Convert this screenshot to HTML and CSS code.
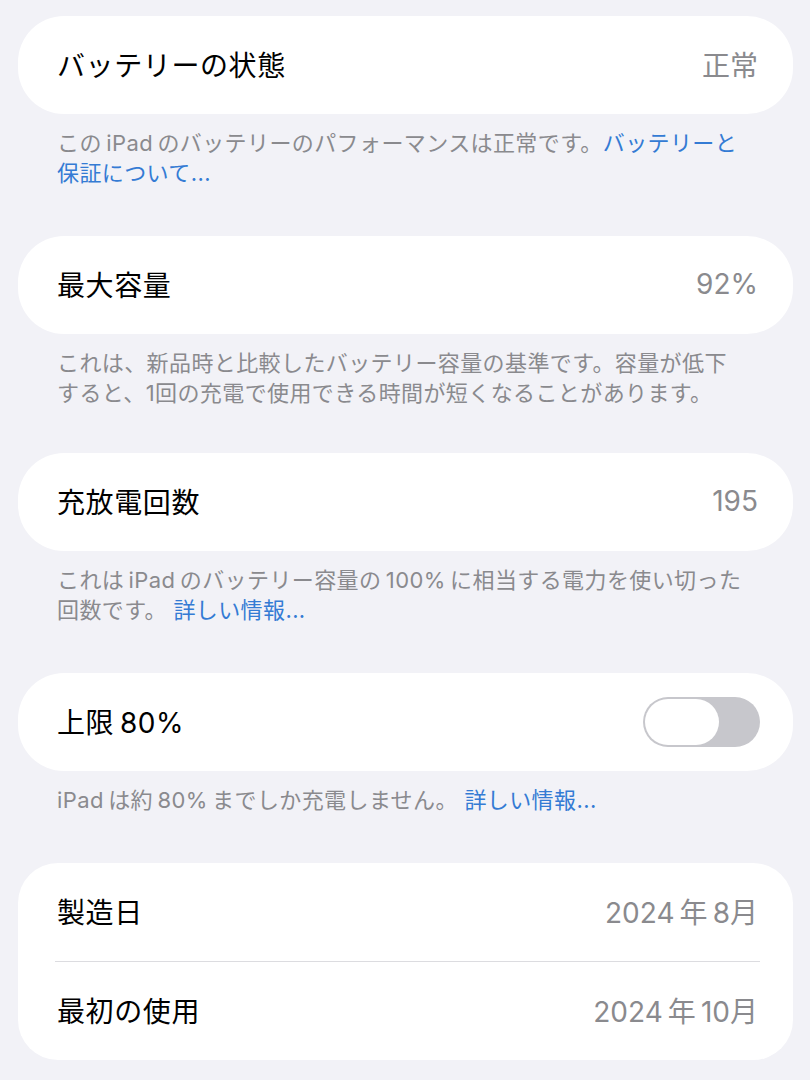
FILE: index.html
```html
<!DOCTYPE html>
<html lang="ja">
<head>
    <meta charset="UTF-8">
    <meta name="viewport" content="width=device-width, initial-scale=1.0">
    <title>バッテリーの状態</title>
    <link rel="stylesheet" href="styles.css">
</head>
<body>

    <!-- バッテリーの状態 -->
    <div class="group">
        <div class="row">
            <span class="label">バッテリーの状態</span>
            <span class="value">正常</span>
        </div>
    </div>
    <p class="note">
        <span class="line">この&#8201;iPad&#8201;のバッテリーのパフォーマンスは正常です。<a href="#">バッテリーと</a></span>
        <span class="line"><a href="#">保証について...</a></span>
    </p>

    <!-- 最大容量 -->
    <div class="group">
        <div class="row">
            <span class="label">最大容量</span>
            <span class="value">92%</span>
        </div>
    </div>
    <p class="note tight">
        <span class="line">これは、新品時と比較したバッテリー容量の基準です。容量が低下</span>
        <span class="line">すると、1回の充電で使用できる時間が短くなることがあります。</span>
    </p>

    <!-- 充放電回数 -->
    <div class="group">
        <div class="row">
            <span class="label">充放電回数</span>
            <span class="value">195</span>
        </div>
    </div>
    <p class="note">
        <span class="line">これは&#8201;iPad&#8201;のバッテリー容量の&#8201;100%&#8201;に相当する電力を使い切った</span>
        <span class="line">回数です。 <a href="#">詳しい情報...</a></span>
    </p>

    <!-- 上限80% -->
    <div class="group">
        <div class="row">
            <span class="label">上限&#8201;80%</span>
            <span class="toggle"><span class="knob"></span></span>
        </div>
    </div>
    <p class="note">
        <span class="line">iPad&#8201;は約&#8201;80%&#8201;までしか充電しません。 <a href="#">詳しい情報...</a></span>
    </p>

    <!-- 日付 -->
    <div class="group tall">
        <div class="row">
            <span class="label">製造日</span>
            <span class="value">2024&#8201;年&#8201;8月</span>
        </div>
        <div class="divider"></div>
        <div class="row">
            <span class="label">最初の使用</span>
            <span class="value">2024&#8201;年&#8201;10月</span>
        </div>
    </div>

</body>
</html>
```

FILE: styles.css
```css
body {
    margin: 0;
    padding: 16px 17px 0 18px;
    background: #f2f2f7;
    font-family: "Inter", "Noto Sans CJK JP", sans-serif;
    color: #000;
}

.group {
    background: #fff;
    border-radius: 46px;
}

.group.tall {
    border-radius: 40px;
}

.row {
    height: 98px;
    display: flex;
    align-items: center;
    justify-content: space-between;
    padding: 0 33px 0 39px;
}

.label {
    font-size: 28px;
    letter-spacing: 0.6px;
    margin-top: -3px;
}

.value {
    font-size: 28px;
    color: #8a8a8e;
    padding-right: 2px;
    margin-top: -3px;
}

.divider {
    height: 1px;
    background: #dcdce0;
    margin: 0 33px 0 37px;
}

.note {
    margin: 0 0 48px;
    padding: 14px 20px 0 39px;
    font-size: 22px;
    letter-spacing: 0.4px;
    color: #8a8a8e;
}

.note.tight {
    margin-bottom: 45px;
}

.note .line {
    display: block;
    height: 30px;
    line-height: 30px;
    white-space: nowrap;
}

.note a {
    color: #347bd4;
    text-decoration: none;
}

.toggle {
    width: 117px;
    height: 50px;
    border-radius: 25px;
    background: #c7c7cc;
    display: flex;
    align-items: center;
    padding: 0 2px;
    box-sizing: border-box;
}

.knob {
    width: 74px;
    height: 46px;
    border-radius: 23px;
    background: #fff;
}
```
